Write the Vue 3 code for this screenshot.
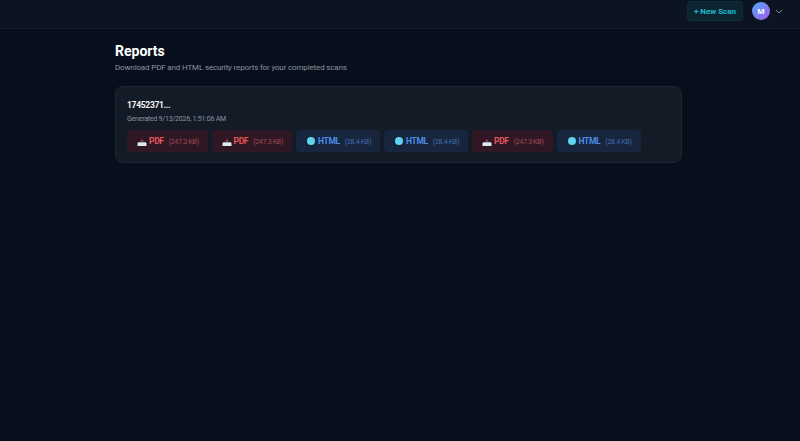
<script setup>
const files = [
  { type: "pdf", label: "PDF", size: "(247.3 KB)" },
  { type: "pdf", label: "PDF", size: "(247.3 KB)" },
  { type: "html", label: "HTML", size: "(28.4 KB)" },
  { type: "html", label: "HTML", size: "(28.4 KB)" },
  { type: "pdf", label: "PDF", size: "(247.3 KB)" },
  { type: "html", label: "HTML", size: "(28.4 KB)" },
];
</script>

<template>
  <div class="page">
    <header class="topbar">
      <button class="new-scan">+ New Scan</button>
      <div class="avatar">M</div>
      <svg class="chevron" width="8" height="5" viewBox="0 0 8 5">
        <path d="M1 1l3 3 3-3" fill="none" stroke="#7d8794" stroke-width="1" />
      </svg>
    </header>

    <main class="content">
      <h1>Reports</h1>
      <p class="sub">Download PDF and HTML security reports for your completed scans</p>

      <section class="card">
        <div class="scan-id">17452371...</div>
        <div class="generated">Generated 9/13/2026, 1:51:06 AM</div>
        <div class="files">
          <a v-for="(f, i) in files" :key="i" class="file" :class="f.type">
            <svg v-if="f.type === 'pdf'" class="icon" width="10" height="7" viewBox="0 0 10 7">
              <path d="M3.5 2L5 0l1.5 2z" fill="#b9344a" />
              <rect x="3.5" y="2" width="3" height="1" fill="#7a2a3a" />
              <rect x="1" y="3" width="8" height="1" fill="#9fb4c8" />
              <rect x="0.5" y="4" width="9" height="3" fill="#dfe7ef" />
            </svg>
            <span v-else class="globe"></span>
            <span class="label">{{ f.label }}</span>
            <span class="size">{{ f.size }}</span>
          </a>
        </div>
      </section>
    </main>
  </div>
</template>

<style>
html,
body {
  margin: 0;
  background: #080f1c;
}
</style>

<style scoped>
.page {
  min-height: 441px;
  background: #080f1c;
  font-family: Roboto, "Noto Sans", sans-serif;
  color: #fff;
}

.topbar {
  height: 29px;
  box-sizing: border-box;
  display: flex;
  align-items: flex-start;
  justify-content: flex-end;
  padding: 1px 17px 0 0;
  background: #0d1421;
  border-bottom: 1px solid #171e2b;
}

.new-scan {
  height: 20px;
  width: 56px;
  padding: 0;
  border: 1px solid #0f2e3b;
  border-radius: 4px;
  background: #0c2531;
  color: #18bdd2;
  font-family: inherit;
  font-size: 8px;
  font-weight: 700;
}

.avatar {
  width: 18px;
  height: 18px;
  margin: 1px 0 0 9px;
  border-radius: 50%;
  background: linear-gradient(135deg, #4fa8f5, #a25cf0);
  display: flex;
  align-items: center;
  justify-content: center;
  font-size: 8px;
  font-weight: 700;
}

.chevron {
  margin: 8px 0 0 5px;
}

.content {
  width: 567px;
  margin-left: 115px;
  padding-top: 14px;
}

h1 {
  margin: 0;
  font-size: 14px;
  line-height: 17px;
  font-weight: 700;
}

.sub {
  margin: 2px 0 0;
  font-size: 8px;
  line-height: 11px;
  letter-spacing: -0.15px;
  color: #8a92a0;
}

.card {
  box-sizing: border-box;
  height: 77px;
  margin-top: 13px;
  padding: 12px 11px;
  background: #131b27;
  border: 1px solid #1e2632;
  border-radius: 8px;
}

.scan-id {
  font-size: 8.5px;
  line-height: 12px;
  letter-spacing: -0.3px;
  font-weight: 700;
  color: #f4f5f7;
}

.generated {
  margin-top: 4px;
  font-size: 7px;
  line-height: 9px;
  letter-spacing: -0.22px;
  color: #8a92a0;
}

.files {
  display: flex;
  gap: 4px;
  margin-top: 6px;
}

.file {
  height: 22px;
  box-sizing: border-box;
  display: flex;
  align-items: center;
  border-radius: 4px;
}

.pdf {
  width: 80.5px;
  padding-left: 10px;
  background: #2f1823;
}

.html {
  width: 84px;
  padding-left: 11px;
  background: #17253e;
}

.icon {
  margin: 3px 2px 0 0;
}

.globe {
  width: 8px;
  height: 8px;
  margin-right: 3px;
  border-radius: 50%;
  background: #5fd3f0;
}

.label {
  font-size: 8.5px;
  letter-spacing: -0.35px;
  font-weight: 700;
}

.size {
  margin: 1px 0 0 5px;
  font-size: 7px;
  letter-spacing: -0.3px;
}

.pdf .label {
  color: #e5555a;
}

.pdf .size {
  color: #a04a54;
}

.html .label {
  color: #4a8de6;
}

.html .size {
  color: #4070ae;
}
</style>
